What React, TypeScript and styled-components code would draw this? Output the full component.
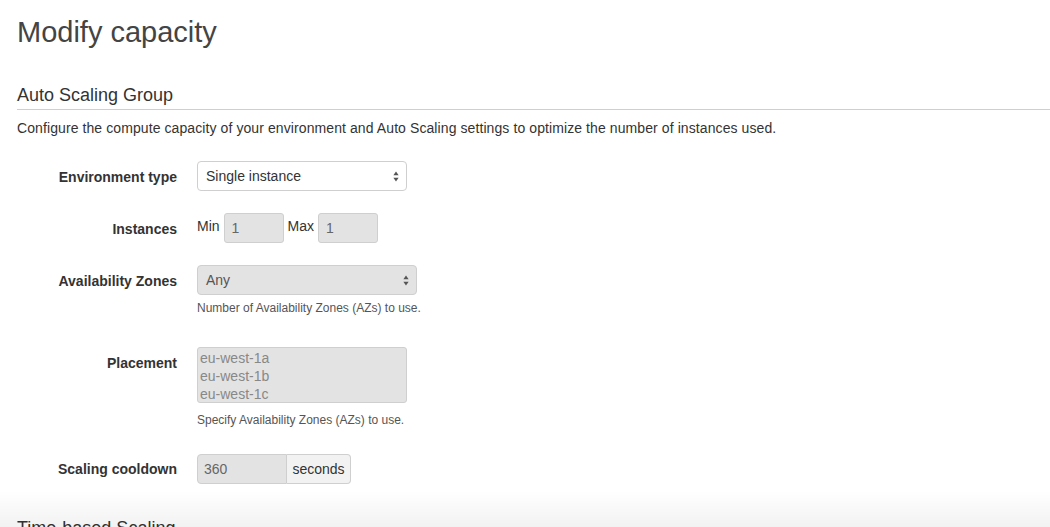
import React from 'react'
import styled, { createGlobalStyle } from 'styled-components'

const GlobalStyle = createGlobalStyle`
  html, body {
    margin: 0;
    padding: 0;
    background: #fff;
  }
  body {
    font-family: "Liberation Sans", Arial, Helvetica, sans-serif;
    color: #333;
    overflow: hidden;
  }
`

const Page = styled.div`
  padding-left: 17px;
  padding-bottom: 40px;
`

const Title = styled.h1`
  margin: 16px 0 0;
  font-size: 29px;
  line-height: 32px;
  font-weight: 400;
  color: #444;
`

const SectionHeading = styled.h2`
  margin: 37px 0 0;
  padding-bottom: 4px;
  font-size: 18px;
  line-height: 20px;
  font-weight: 400;
  color: #333;
  border-bottom: 1px solid #cfcfcf;
`

const NextHeading = styled(SectionHeading)`
  margin-top: 34px;
  border-bottom: none;
`

const Description = styled.p`
  margin: 8px 0 0;
  font-size: 14px;
  line-height: 20px;
  letter-spacing: 0.09px;
`

const Form = styled.div`
  display: flex;
  flex-direction: column;
`

const Row = styled.div<{ $top: number }>`
  display: grid;
  grid-template-columns: 160px auto;
  column-gap: 20px;
  margin-top: ${p => p.$top}px;
`

const Label = styled.label`
  padding-top: 6px;
  font-size: 14px;
  line-height: 20px;
  font-weight: 700;
  text-align: right;
  color: #333;
`

const Controls = styled.div`
  display: flex;
  flex-direction: column;
  align-items: flex-start;
`

const Select = styled.div<{ $width: number; $disabled?: boolean }>`
  box-sizing: border-box;
  display: flex;
  align-items: center;
  justify-content: space-between;
  width: ${p => p.$width}px;
  height: 30px;
  padding: 0 7px 0 8px;
  font-size: 14px;
  color: ${p => p.$disabled ? '#555' : '#333'};
  background: ${p => p.$disabled ? '#e3e3e3' : '#fff'};
  border: 1px solid #cfcfcf;
  border-radius: 4px;
`

const Inline = styled.div`
  display: flex;
  align-items: center;
  gap: 4px;
  font-size: 14px;
  color: #333;

  span { margin-top: -4px; }
`

const Input = styled.div<{ $width: number; $disabled?: boolean; $joined?: boolean }>`
  box-sizing: border-box;
  display: flex;
  align-items: center;
  width: ${p => p.$width}px;
  height: 30px;
  padding-left: ${p => p.$joined ? 6 : 7}px;
  font-size: 14px;
  color: #666;
  background: ${p => p.$disabled ? '#e3e3e3' : '#fff'};
  border: 1px solid #cfcfcf;
  border-radius: ${p => p.$joined ? '4px 0 0 4px' : '3px'};
`

const InputGroup = styled.div`
  display: flex;
  margin-top: 1px;
`

const Addon = styled.div`
  box-sizing: border-box;
  display: flex;
  align-items: center;
  justify-content: center;
  width: 64px;
  height: 30px;
  font-size: 14px;
  color: #333;
  background: #f2f2f2;
  border: 1px solid #cfcfcf;
  border-left: none;
  border-radius: 0 4px 4px 0;
`

const ListBox = styled.ul`
  box-sizing: border-box;
  width: 210px;
  height: 56px;
  margin: 0 0 4px;
  padding: 1px 2px;
  list-style: none;
  font-size: 14px;
  line-height: 18px;
  color: #888;
  background: #e3e3e3;
  border: 1px solid #cfcfcf;
  border-radius: 3px;
`

const Help = styled.div`
  margin-top: 5px;
  font-size: 12px;
  line-height: 17px;
  color: #555;
`

const Fade = styled.div`
  position: fixed;
  left: 0;
  right: 0;
  bottom: 0;
  height: 36px;
  pointer-events: none;
  background: linear-gradient(to bottom, rgba(0, 0, 0, 0), rgba(0, 0, 0, 0.05));
`

const UpDown = () =>
  <svg width="6" height="11" viewBox="0 0 6 11">
    <path d="M3 0.5 L5.6 4.3 L0.4 4.3 Z" fill="#555" />
    <path d="M3 10.5 L5.6 6.7 L0.4 6.7 Z" fill="#555" />
  </svg>


type Field = {
  label: string
  top: number
  help?: string
  control: React.ReactNode
}

const fields: Field[] = [
  {
    label: 'Environment type',
    top: 23,
    control: <Select $width={210}><span>Single instance</span><UpDown /></Select>,
  },
  {
    label: 'Instances',
    top: 22,
    control: (
      <Inline>
        <span>Min</span>
        <Input $width={60} $disabled>1</Input>
        <span>Max</span>
        <Input $width={60} $disabled>1</Input>
      </Inline>
    ),
  },
  {
    label: 'Availability Zones',
    top: 22,
    help: 'Number of Availability Zones (AZs) to use.',
    control: <Select $width={220} $disabled><span>Any</span><UpDown /></Select>,
  },
  {
    label: 'Placement',
    top: 30,
    help: 'Specify Availability Zones (AZs) to use.',
    control: (
      <ListBox>
        <li>eu-west-1a</li>
        <li>eu-west-1b</li>
        <li>eu-west-1c</li>
      </ListBox>
    ),
  },
  {
    label: 'Scaling cooldown',
    top: 24,
    control: (
      <InputGroup>
        <Input $width={90} $disabled $joined>360</Input>
        <Addon>seconds</Addon>
      </InputGroup>
    ),
  },
]


export default function App() {
  return (
    <Page>
      <GlobalStyle />
      <Title>Modify capacity</Title>

      <SectionHeading>Auto Scaling Group</SectionHeading>
      <Description>
        Configure the compute capacity of your environment and Auto Scaling
        settings to optimize the number of instances used.
      </Description>

      <Form>
        {fields.map(f =>
          <Row key={f.label} $top={f.top}>
            <Label>{f.label}</Label>
            <Controls>
              {f.control}
              {f.help && <Help>{f.help}</Help>}
            </Controls>
          </Row>
        )}
      </Form>

      <NextHeading>Time-based Scaling</NextHeading>
      <Fade />
    </Page>
  )
}
